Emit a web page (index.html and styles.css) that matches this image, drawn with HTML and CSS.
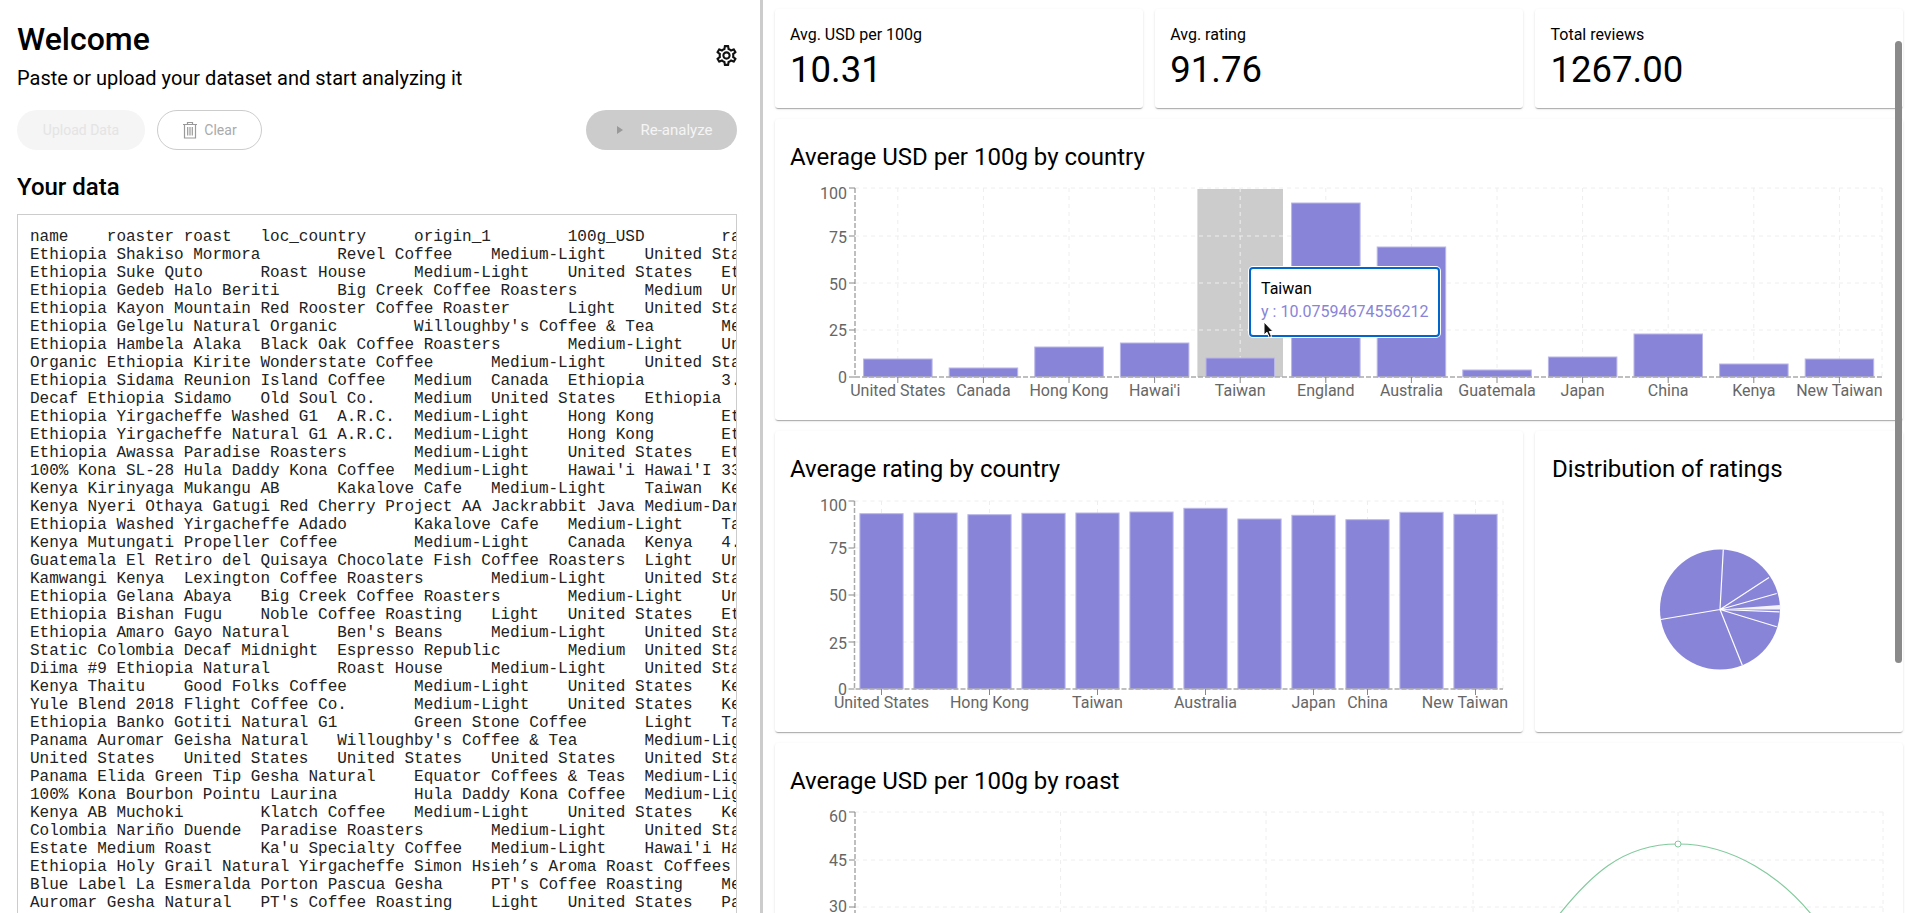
FILE: index.html
```html
<!DOCTYPE html>
<html lang="en">
<head>
<meta charset="UTF-8">
<meta name="viewport" content="width=device-width, initial-scale=1.0">
<title>Coffee Dashboard</title>
<link rel="stylesheet" href="styles.css">
</head>
<body>
<div class="app">
    <section class="input-panel">
        <header class="intro">
            <div>
                <h1>Welcome</h1>
                <p>Paste or upload your dataset and start analyzing it</p>
            </div>
            <svg class="gear" viewBox="0 0 24 24" width="25" height="25"><path d="M19.43 12.98c.04-.32.07-.64.07-.98 0-.34-.03-.66-.07-.98l2.11-1.65c.19-.15.24-.42.12-.64l-2-3.46c-.09-.16-.26-.25-.44-.25-.06 0-.12.01-.17.03l-2.49 1c-.52-.4-1.08-.73-1.69-.98l-.38-2.65C14.46 2.18 14.25 2 14 2h-4c-.25 0-.46.18-.49.42l-.38 2.65c-.61.25-1.17.59-1.69.98l-2.49-1c-.06-.02-.12-.03-.18-.03-.17 0-.34.09-.43.25l-2 3.46c-.13.22-.07.49.12.64l2.11 1.65c-.04.32-.07.65-.07.98 0 .33.03.66.07.98l-2.11 1.65c-.19.15-.24.42-.12.64l2 3.46c.09.16.26.25.44.25.06 0 .12-.01.17-.03l2.49-1c.52.4 1.08.73 1.69.98l.38 2.65c.03.24.24.42.49.42h4c.25 0 .46-.18.49-.42l.38-2.65c.61-.25 1.17-.59 1.69-.98l2.49 1c.06.02.12.03.18.03.17 0 .34-.09.43-.25l2-3.46c.12-.22.07-.49-.12-.64l-2.11-1.65zm-1.98-1.71c.04.31.05.52.05.73 0 .21-.02.43-.05.73l-.14 1.13.89.7 1.08.84-.7 1.21-1.27-.51-1.04-.42-.9.68c-.43.32-.84.56-1.25.73l-1.06.43-.16 1.13-.2 1.35h-1.4l-.19-1.35-.16-1.13-1.06-.43c-.43-.18-.83-.41-1.23-.71l-.91-.7-1.06.43-1.27.51-.7-1.21 1.08-.84.89-.7-.14-1.13c-.03-.31-.05-.54-.05-.74s.02-.43.05-.73l.14-1.13-.89-.7-1.08-.84.7-1.21 1.27.51 1.04.42.9-.68c.43-.32.84-.56 1.25-.73l1.06-.43.16-1.13.2-1.35h1.39l.19 1.35.16 1.13 1.06.43c.43.18.83.41 1.23.71l.91.7 1.06-.43 1.27-.51.7 1.21-1.07.85-.89.7.14 1.13zM12 8c-2.21 0-4 1.79-4 4s1.79 4 4 4 4-1.79 4-4-1.79-4-4-4zm0 6c-1.1 0-2-.9-2-2s.9-2 2-2 2 .9 2 2-.9 2-2 2z"/></svg>
        </header>
        <div class="actions">
            <button class="btn btn-upload" disabled>Upload Data</button>
            <button class="btn btn-clear" disabled>
                <svg viewBox="0 0 16 18" width="16" height="18"><path d="M1 3.5h14M5.5 3.5V1.5h5v2M2.5 3.5v13.5h11V3.5M5.7 6v8.5M8 6v8.5M10.3 6v8.5"/></svg>
                Clear
            </button>
            <button class="btn btn-analyze" disabled>
                <span class="play"></span>
                Re-analyze
            </button>
        </div>
        <h2>Your data</h2>
        <textarea class="data" readonly wrap="off">name	roaster	roast	loc_country	origin_1	100g_USD	rating
Ethiopia Shakiso Mormora	Revel Coffee	Medium-Light	United States	Ethiopia
Ethiopia Suke Quto	Roast House	Medium-Light	United States	Ethiopia
Ethiopia Gedeb Halo Beriti	Big Creek Coffee Roasters	Medium	United States
Ethiopia Kayon Mountain	Red Rooster Coffee Roaster	Light	United States
Ethiopia Gelgelu Natural Organic	Willoughby's Coffee &amp; Tea	Medium-Light
Ethiopia Hambela Alaka	Black Oak Coffee Roasters	Medium-Light	United States
Organic Ethiopia Kirite	Wonderstate Coffee	Medium-Light	United States
Ethiopia Sidama	Reunion Island Coffee	Medium	Canada	Ethiopia	3.5
Decaf Ethiopia Sidamo	Old Soul Co.	Medium	United States	Ethiopia
Ethiopia Yirgacheffe Washed G1	A.R.C.	Medium-Light	Hong Kong	Ethiopia
Ethiopia Yirgacheffe Natural G1	A.R.C.	Medium-Light	Hong Kong	Ethiopia
Ethiopia Awassa	Paradise Roasters	Medium-Light	United States	Ethiopia
100% Kona SL-28	Hula Daddy Kona Coffee	Medium-Light	Hawai'i	Hawai'I	33
Kenya Kirinyaga Mukangu AB	Kakalove Cafe	Medium-Light	Taiwan	Kenya
Kenya Nyeri Othaya Gatugi Red Cherry Project AA	Jackrabbit Java	Medium-Dark
Ethiopia Washed Yirgacheffe Adado	Kakalove Cafe	Medium-Light	Taiwan
Kenya Mutungati	Propeller Coffee	Medium-Light	Canada	Kenya	4.5
Guatemala El Retiro del Quisaya	Chocolate Fish Coffee Roasters	Light	United States
Kamwangi Kenya	Lexington Coffee Roasters	Medium-Light	United States
Ethiopia Gelana Abaya	Big Creek Coffee Roasters	Medium-Light	United States
Ethiopia Bishan Fugu	Noble Coffee Roasting	Light	United States	Ethiopia
Ethiopia Amaro Gayo Natural	Ben's Beans	Medium-Light	United States
Static Colombia Decaf Midnight	Espresso Republic	Medium	United States
Diima #9 Ethiopia Natural	Roast House	Medium-Light	United States
Kenya Thaitu	Good Folks Coffee	Medium-Light	United States	Kenya
Yule Blend 2018	Flight Coffee Co.	Medium-Light	United States	Kenya
Ethiopia Banko Gotiti Natural G1	Green Stone Coffee	Light	Taiwan
Panama Auromar Geisha Natural	Willoughby's Coffee &amp; Tea	Medium-Light
United States	United States	United States	United States	United States
Panama Elida Green Tip Gesha Natural	Equator Coffees &amp; Teas	Medium-Light
100% Kona Bourbon Pointu Laurina	Hula Daddy Kona Coffee	Medium-Light
Kenya AB Muchoki	Klatch Coffee	Medium-Light	United States	Kenya
Colombia Nariño Duende	Paradise Roasters	Medium-Light	United States
Estate Medium Roast	Ka'u Specialty Coffee	Medium-Light	Hawai'i	Hawai'i
Ethiopia Holy Grail Natural Yirgacheffe	Simon Hsieh’s Aroma Roast Coffees
Blue Label La Esmeralda Porton Pascua Gesha	PT's Coffee Roasting	Medium-Light
Auromar Gesha Natural	PT's Coffee Roasting	Light	United States	Panama</textarea>
    </section>

    <section class="dashboard">
        <div class="card kpi">
            <div class="kpi-label">Avg. USD per 100g</div>
            <div class="kpi-value">10.31</div>
        </div>
        <div class="card kpi">
            <div class="kpi-label">Avg. rating</div>
            <div class="kpi-value">91.76</div>
        </div>
        <div class="card kpi">
            <div class="kpi-label">Total reviews</div>
            <div class="kpi-value">1267.00</div>
        </div>

        <!-- svg viewBoxes use page coordinates, easier to measure against -->
        <div class="card chart wide-3">
            <h3>Average USD per 100g by country</h3>
            <svg class="plot" viewBox="790 172 1115 232" width="1115" height="232">
                <rect class="hover-band" x="1197.4" y="189" width="85.6" height="188"/>
                <path class="grid" d="M855 188H1882M855 236H1882M855 283H1882M855 330H1882M897.8 188V377M983.4 188V377M1069 188V377M1154.6 188V377M1240.2 188V377M1325.8 188V377M1411.4 188V377M1497 188V377M1582.6 188V377M1668.2 188V377M1753.8 188V377M1839.4 188V377M1882 188V377"/>
                <g class="bars">
                    <rect x="863.6" y="359" width="68.5" height="18"/>
                    <rect x="949.2" y="368" width="68.5" height="9"/>
                    <rect x="1034.8" y="347" width="68.5" height="30"/>
                    <rect x="1120.4" y="343" width="68.5" height="34"/>
                    <rect x="1206" y="358" width="68.5" height="19"/>
                    <rect x="1291.6" y="203" width="68.5" height="174"/>
                    <rect x="1377.2" y="247" width="68.5" height="130"/>
                    <rect x="1462.8" y="370" width="68.5" height="7"/>
                    <rect x="1548.4" y="357" width="68.5" height="20"/>
                    <rect x="1634" y="334" width="68.5" height="43"/>
                    <rect x="1719.6" y="364" width="68.5" height="13"/>
                    <rect x="1805.2" y="359" width="68.5" height="18"/>
                </g>
                <path class="axis" d="M855 188V377H1882"/>
                <path class="tick" d="M849 188H855M849 236H855M849 283H855M849 330H855M849 377H855M897.8 377V383M983.4 377V383M1069 377V383M1154.6 377V383M1240.2 377V383M1325.8 377V383M1411.4 377V383M1497 377V383M1582.6 377V383M1668.2 377V383M1753.8 377V383M1839.4 377V383"/>
                <g class="y-labels">
                    <text x="847" y="199">100</text>
                    <text x="847" y="243">75</text>
                    <text x="847" y="290">50</text>
                    <text x="847" y="336">25</text>
                    <text x="847" y="383">0</text>
                </g>
                <g class="x-labels">
                    <text x="897.8" y="396">United States</text>
                    <text x="983.4" y="396">Canada</text>
                    <text x="1069" y="396">Hong Kong</text>
                    <text x="1154.6" y="396">Hawai'i</text>
                    <text x="1240.2" y="396">Taiwan</text>
                    <text x="1325.8" y="396">England</text>
                    <text x="1411.4" y="396">Australia</text>
                    <text x="1497" y="396">Guatemala</text>
                    <text x="1582.6" y="396">Japan</text>
                    <text x="1668.2" y="396">China</text>
                    <text x="1753.8" y="396">Kenya</text>
                    <text x="1839.4" y="396">New Taiwan</text>
                </g>
            </svg>
            <div class="tooltip">
                <div>Taiwan</div>
                <div class="tooltip-value">y : 10.07594674556212</div>
            </div>
            <svg class="pointer" viewBox="0 0 12 18" width="12" height="18"><path d="M1 1V14L4 11.2L6.3 16.5L8.6 15.5L6.3 10.5H10Z"/></svg>
        </div>

        <div class="card chart wide-2">
            <h3>Average rating by country</h3>
            <svg class="plot" viewBox="790 484 720 232" width="720" height="232">
                <path class="grid" d="M854.5 501H1503M854.5 548H1503M854.5 595H1503M854.5 642H1503M881.5 501V689M989.5 501V689M1097.5 501V689M1205.5 501V689M1313.5 501V689M1367.5 501V689M1475.5 501V689M1503 501V689"/>
                <g class="bars">
                    <rect x="859.9" y="513.7" width="43.2" height="175.3"/>
                    <rect x="913.9" y="513" width="43.2" height="176"/>
                    <rect x="967.9" y="514.7" width="43.2" height="174.3"/>
                    <rect x="1021.9" y="513.3" width="43.2" height="175.7"/>
                    <rect x="1075.9" y="513" width="43.2" height="176"/>
                    <rect x="1129.9" y="512" width="43.2" height="177"/>
                    <rect x="1183.9" y="508.3" width="43.2" height="180.7"/>
                    <rect x="1237.9" y="519" width="43.2" height="170"/>
                    <rect x="1291.9" y="515.3" width="43.2" height="173.7"/>
                    <rect x="1345.9" y="519.7" width="43.2" height="169.3"/>
                    <rect x="1399.9" y="512.3" width="43.2" height="176.7"/>
                    <rect x="1453.9" y="514.3" width="43.2" height="174.7"/>
                </g>
                <path class="axis" d="M854.5 501V689H1503"/>
                <path class="tick" d="M848.5 501H854.5M848.5 548H854.5M848.5 595H854.5M848.5 642H854.5M848.5 689H854.5M881.5 689V695M989.5 689V695M1097.5 689V695M1205.5 689V695M1313.5 689V695M1367.5 689V695M1475.5 689V695"/>
                <g class="y-labels">
                    <text x="847" y="511">100</text>
                    <text x="847" y="554">75</text>
                    <text x="847" y="601">50</text>
                    <text x="847" y="649">25</text>
                    <text x="847" y="695">0</text>
                </g>
                <g class="x-labels">
                    <text x="881.5" y="708">United States</text>
                    <text x="989.5" y="708">Hong Kong</text>
                    <text x="1097.5" y="708">Taiwan</text>
                    <text x="1205.5" y="708">Australia</text>
                    <text x="1313.5" y="708">Japan</text>
                    <text x="1367.5" y="708">China</text>
                    <text x="1465" y="708">New Taiwan</text>
                </g>
            </svg>
        </div>

        <div class="card chart pie-card">
            <h3>Distribution of ratings</h3>
            <svg class="plot" viewBox="1552 484 340 232" width="340" height="232">
                <circle class="slice" cx="1720" cy="609.5" r="60"/>
                <path class="slice-gap" d="M1720 609.5L1723.3 549.5M1720 609.5L1769 577.5M1720 609.5L1776.7 593.5M1720 609.5L1779.5 611.8M1720 609.5L1776.7 626.8M1720 609.5L1742.3 665.2M1720 609.5L1660.7 619.5"/>
                <path class="slice-wedge" d="M1720 609.5L1780.5 605L1780.5 609.5Z"/>
            </svg>
        </div>

        <div class="card chart wide-3">
            <h3>Average USD per 100g by roast</h3>
            <svg class="plot" viewBox="790 796 1115 232" width="1115" height="232">
                <path class="grid" d="M855 812H1883M855 860H1883M855 907H1883M1060.6 812V940M1266 812V940M1473 812V940M1678 812V940M1883 812V940"/>
                <path class="axis" d="M855 812V940"/>
                <path class="tick" d="M849 812H855M849 860H855M849 907H855"/>
                <g class="y-labels">
                    <text x="847" y="822">60</text>
                    <text x="847" y="866">45</text>
                    <text x="847" y="912">30</text>
                </g>
                <path class="line" d="M1540 940C1590 870 1625 844 1678 844C1725 844 1785 870 1830 940"/>
                <circle class="dot" cx="1678" cy="844" r="3"/>
            </svg>
        </div>

        <div class="scroll-thumb"></div>
    </section>
</div>
</body>
</html>
```
FILE: styles.css
```css
* {
    box-sizing: border-box;
}
html, body {
    margin: 0;
    height: 100%;
    overflow: hidden;
}
body {
    font-family: Roboto, Arial, sans-serif;
    color: #000;
    background-color: #fff;
}
.app {
    display: flex;
    height: 913px;
}

/* left side */
.input-panel {
    flex: 0 0 763px;
    display: flex;
    flex-direction: column;
    padding: 20px 23px 0 17px;
    border-right: 3px solid #ccc;
    overflow: hidden;
}
.intro {
    display: flex;
    justify-content: space-between;
    align-items: center;
}
h1 {
    margin: 0;
    font-size: 32px;
    line-height: 38px;
    font-weight: 500;
}
.intro p {
    margin: 8px 0 0;
    font-size: 20px;
    line-height: 24px;
}
.gear {
    margin-right: -2px;
    fill: #111;
}
.actions {
    display: flex;
    gap: 12px;
    margin-top: 20px;
}
.btn {
    display: flex;
    align-items: center;
    justify-content: center;
    height: 40px;
    padding: 0;
    border: none;
    border-radius: 20px;
    font-family: inherit;
    font-size: 14px;
}
.btn-upload {
    width: 128px;
    background-color: #f5f5f5;
    color: #e4e4e4;
}
.btn-clear {
    width: 105px;
    gap: 6px;
    background-color: #fff;
    border: 1px solid #ccc;
    color: #aaa;
}
.btn-clear svg {
    fill: none;
    stroke: #999;
    stroke-width: 1.2;
}
.btn-analyze {
    width: 151px;
    gap: 18px;
    padding-left: 6px;
    margin-left: auto;
    background-color: #ccc;
    color: #f5f5f5;
    font-size: 15px;
}
.play {
    width: 0;
    height: 0;
    border-left: 6px solid #999;
    border-top: 4px solid transparent;
    border-bottom: 4px solid transparent;
}
h2 {
    margin: 23px 0 0;
    font-size: 24px;
    line-height: 28px;
    font-weight: 500;
}
.data {
    flex: 1;
    display: block;
    width: 100%;
    margin: 13px 0 -40px;
    padding: 13px 12px 12px;
    border: 1px solid #ccc;
    border-radius: 0;
    outline: none;
    overflow: hidden;
    resize: none;
    white-space: pre;
    tab-size: 8;
    font-family: "Liberation Mono", monospace;
    font-size: 16px;
    line-height: 18px;
    color: #222;
}

/* right side */
.dashboard {
    position: relative;
    flex: 1;
    display: grid;
    grid-template-columns: repeat(3, 368.25px);
    grid-auto-rows: min-content;
    gap: 11px 12px;
    padding: 9px 0 0 11.5px;
    overflow: hidden;
}
.card {
    position: relative;
    background-color: #fff;
    border-radius: 3px;
    box-shadow: 0 2px 1px -1px rgba(0,0,0,.2), 0 1px 1px 0 rgba(0,0,0,.1), 0 1px 3px 0 rgba(0,0,0,.1);
}
.kpi {
    height: 99px;
    padding: 16px 15.5px 0;
}
.kpi-label {
    font-size: 16px;
    line-height: 19px;
}
.kpi-value {
    margin-top: 4px;
    font-size: 36.5px;
    line-height: 44px;
}
.chart {
    height: 301px;
    padding: 24px 0 16px 15.5px;
    overflow: hidden;
}
.wide-3 {
    grid-column: span 3;
    overflow: visible;
}
.wide-2 {
    grid-column: span 2;
}
.pie-card {
    padding-left: 17px;
}
h3 {
    margin: 0 0 1px;
    font-size: 24px;
    line-height: 28px;
    font-weight: 400;
}
.plot {
    display: block;
}
.plot text {
    font-family: Roboto, Arial, sans-serif;
    font-size: 16px;
    fill: #666;
}
.y-labels text {
    text-anchor: end;
}
.x-labels text {
    text-anchor: middle;
}
.hover-band {
    fill: #ccc;
}
.grid {
    fill: none;
    stroke: #eee;
    stroke-dasharray: 4 4;
}
.bars rect {
    fill: #8884d8;
    stroke: #b9b6e8;
    stroke-width: 1;
}
.axis {
    fill: none;
    stroke: #aaa;
    stroke-width: 1.5;
    stroke-dasharray: 5 2;
}
.tick {
    fill: none;
    stroke: #888;
}
.slice {
    fill: #8884d8;
}
.slice-gap {
    fill: none;
    stroke: #fff;
    stroke-width: 1.2;
}
.slice-wedge {
    fill: #f4f3fc;
}
.line {
    fill: none;
    stroke: #82ca9d;
    stroke-width: 1.2;
}
.dot {
    fill: #fff;
    stroke: #82ca9d;
}
.tooltip {
    position: absolute;
    left: 474.5px;
    top: 148px;
    width: 191px;
    height: 70px;
    padding: 8px 10px;
    background-color: #fff;
    border: 2px solid #0066cc;
    border-radius: 4px;
    box-shadow: 0 0 0 1px #fff;
    font-size: 16px;
    line-height: 23px;
    white-space: nowrap;
}
.tooltip-value {
    color: #8884d8;
}
.pointer {
    position: absolute;
    left: 488px;
    top: 202px;
}
.pointer path {
    fill: #111;
    stroke: #fff;
    stroke-width: 1;
}
.scroll-thumb {
    position: absolute;
    right: 3px;
    top: 41px;
    width: 7px;
    height: 622px;
    border-radius: 4px;
    background-color: #8a8a8a;
}
```
